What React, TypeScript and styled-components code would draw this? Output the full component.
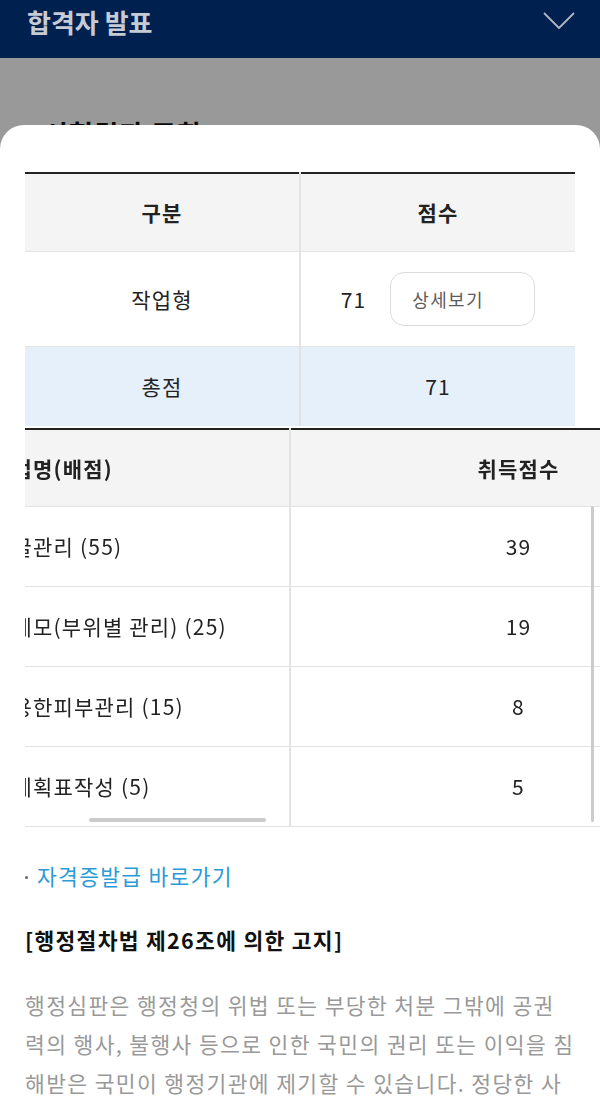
import { useLayoutEffect, useRef } from "react";
import styled, { createGlobalStyle } from "styled-components";

const GlobalStyle = createGlobalStyle`
  html, body {
    margin: 0;
    padding: 0;
    background: #ffffff;
  }
  body {
    font-family: "Noto Sans CJK KR", "Noto Sans", sans-serif;
    color: #222;
    letter-spacing: 1.2px;
  }
  * {
    box-sizing: border-box;
  }
`;

interface ScoreItem {
  name: string;
  score: number;
}

const detailItems: ScoreItem[] = [
  { name: "얼굴관리 (55)", score: 39 },
  { name: "및제모(부위별 관리) (25)", score: 19 },
  { name: "이용한피부관리 (15)", score: 8 },
  { name: "피계획표작성 (5)", score: 5 },
];

const App = () => {
  const scrollRef = useRef<HTMLDivElement>(null);

  // 표가 옆으로 조금 스크롤된 상태
  useLayoutEffect(() => {
    if (scrollRef.current) scrollRef.current.scrollLeft = 53;
  }, []);

  return (
    <>
      <GlobalStyle />
      <Header>
        <HeaderTitle>합격자 발표</HeaderTitle>
        <svg width="34" height="20" viewBox="0 0 34 20" fill="none">
          <polyline
            points="2,2 17,17 32,2"
            stroke="#aeb4c0"
            strokeWidth="1.8"
            strokeLinejoin="round"
          />
        </svg>
      </Header>
      <PageBody>
        <PageTitle>시험결과 조회</PageTitle>
      </PageBody>
      <Dim />
      <Sheet>
        <ScoreTable>
          <colgroup>
            <col style={{ width: "50%" }} />
            <col style={{ width: "50%" }} />
          </colgroup>
          <thead>
            <tr>
              <HeadCell>구분</HeadCell>
              <HeadCell>점수</HeadCell>
            </tr>
          </thead>
          <tbody>
            <tr>
              <Cell $height={95}>작업형</Cell>
              <Cell $height={95}>
                <ScoreGroup>
                  <span>71</span>
                  <DetailButton type="button">상세보기</DetailButton>
                </ScoreGroup>
              </Cell>
            </tr>
            <TotalRow>
              <Cell $height={80}>총점</Cell>
              <Cell $height={80}>71</Cell>
            </TotalRow>
          </tbody>
        </ScoreTable>

        <DetailWrap>
          <DetailScroller ref={scrollRef}>
            <DetailTable>
              <colgroup>
                <col style={{ width: 318 }} />
                <col style={{ width: 456 }} />
              </colgroup>
              <thead>
                <tr>
                  <DetailHead $align="left">작업명(배점)</DetailHead>
                  <DetailHead $align="center">취득점수</DetailHead>
                </tr>
              </thead>
              <tbody>
                {detailItems.map((item) => (
                  <tr key={item.name}>
                    <DetailCell $align="left">{item.name}</DetailCell>
                    <DetailCell $align="center">{item.score}</DetailCell>
                  </tr>
                ))}
              </tbody>
            </DetailTable>
          </DetailScroller>
          <HThumb />
          <VThumb />
        </DetailWrap>

        <LinkLine>
          <Bullet />
          <LinkText href="#">자격증발급 바로가기</LinkText>
        </LinkLine>
        <NoticeTitle>[행정절차법 제26조에 의한 고지]</NoticeTitle>
        <NoticeText>
          행정심판은 행정청의 위법 또는 부당한 처분 그밖에 공권력의 행사,
          불행사 등으로 인한 국민의 권리 또는 이익을 침해받은 국민이
          행정기관에 제기할 수 있습니다. 정당한 사유 없이 처분이 있음을 안
          날로부터 90일 이내에 청구하여야 합니다.
        </NoticeText>
      </Sheet>
    </>
  );
};

export default App;

const Header = styled.header`
  height: 58px;
  background: #00214f;
  display: flex;
  align-items: center;
  justify-content: space-between;
  padding: 0 24px 16px 27px;
`;

const HeaderTitle = styled.h1`
  margin: 0;
  font-size: 26px;
  font-weight: 700;
  color: #c6cbd4;
  letter-spacing: 0;
`;

const PageBody = styled.main`
  padding: 0 44px;
  height: 1100px;
`;

const PageTitle = styled.h2`
  margin: 57px 0 0;
  font-size: 26px;
  line-height: 36px;
  font-weight: 700;
  color: #111;
`;

const Dim = styled.div`
  position: fixed;
  top: 58px;
  left: 0;
  right: 0;
  bottom: 0;
  background: rgba(0, 0, 0, 0.4);
`;

const Sheet = styled.section`
  position: fixed;
  top: 125px;
  left: 0;
  right: 0;
  bottom: 0;
  background: #ffffff;
  border-radius: 24px 24px 0 0;
  padding: 47px 25px 0;
  overflow: hidden;
`;

const ScoreTable = styled.table`
  width: 100%;
  border-collapse: collapse;
  table-layout: fixed;
  border-top: 2px solid #222;
  font-size: 21px;
  color: #222;
`;

const HeadCell = styled.th`
  height: 78px;
  background: #f4f4f4;
  font-weight: 700;
  text-align: center;
  padding: 0;
  border-bottom: 1px solid #e3e3e3;
  & + & {
    border-left: 2px solid #e3e3e3;
  }
`;

const Cell = styled.td<{ $height: number }>`
  height: ${({ $height }) => $height}px;
  text-align: center;
  padding: 0;
  border-bottom: 1px solid #e3e3e3;
  & + & {
    border-left: 2px solid #e3e3e3;
  }
`;

const TotalRow = styled.tr`
  background: #e5f0fb;
  td {
    border-bottom: none;
  }
`;

const ScoreGroup = styled.div`
  display: inline-flex;
  align-items: center;
  gap: 24px;
`;

const DetailButton = styled.button`
  width: 145px;
  height: 54px;
  border: 1.5px solid #dcdcdc;
  border-radius: 14px;
  background: #fff;
  font-family: inherit;
  font-size: 18px;
  letter-spacing: 1.3px;
  color: #5c5c5c;
  text-align: left;
  padding: 0 0 0 21px;
`;

const DetailWrap = styled.div`
  position: relative;
  margin-top: 2px;
  margin-right: -25px;
`;

const DetailScroller = styled.div`
  overflow-x: auto;
  scrollbar-width: none;
  &::-webkit-scrollbar {
    display: none;
  }
`;

const DetailTable = styled.table`
  width: 774px;
  border-collapse: collapse;
  table-layout: fixed;
  border-top: 2px solid #222;
  font-size: 21px;
  color: #222;
`;

const DetailHead = styled.th<{ $align: "left" | "center" }>`
  height: 77px;
  background: #f4f4f4;
  font-weight: 700;
  text-align: ${({ $align }) => $align};
  padding: 0 0 0 ${({ $align }) => ($align === "left" ? "20px" : "0")};
  border-bottom: 1px solid #e3e3e3;
  & + & {
    border-left: 2px solid #e3e3e3;
  }
`;

const DetailCell = styled.td<{ $align: "left" | "center" }>`
  height: 80px;
  text-align: ${({ $align }) => $align};
  padding: 0 0 0 ${({ $align }) => ($align === "left" ? "20px" : "0")};
  border-bottom: 1px solid #e3e3e3;
  white-space: nowrap;
  & + & {
    border-left: 2px solid #e3e3e3;
  }
`;

const HThumb = styled.div`
  position: absolute;
  left: 64px;
  bottom: 5px;
  width: 177px;
  height: 4px;
  border-radius: 2px;
  background: #cbcbcb;
`;

const VThumb = styled.div`
  position: absolute;
  right: 6px;
  top: 78px;
  width: 3px;
  height: 316px;
  border-radius: 2px;
  background: #cbcbcb;
`;

const LinkLine = styled.p`
  margin: 34px 0 0;
  font-size: 21.5px;
  line-height: 30px;
  letter-spacing: 1.3px;
  display: flex;
  align-items: center;
  gap: 9px;
`;

const Bullet = styled.span`
  width: 3px;
  height: 3px;
  margin-top: 4px;
  border-radius: 50%;
  background: #666;
`;

const LinkText = styled.a`
  color: #2b9bd6;
  text-decoration: none;
`;

const NoticeTitle = styled.h3`
  margin: 34px 0 0;
  font-size: 21.5px;
  line-height: 30px;
  letter-spacing: 1.3px;
  font-weight: 700;
  color: #111;
`;

const NoticeText = styled.p`
  margin: 30px 0 0;
  font-size: 21.5px;
  line-height: 39px;
  letter-spacing: 1.37px;
  color: #999;
  word-break: break-all;
`;
